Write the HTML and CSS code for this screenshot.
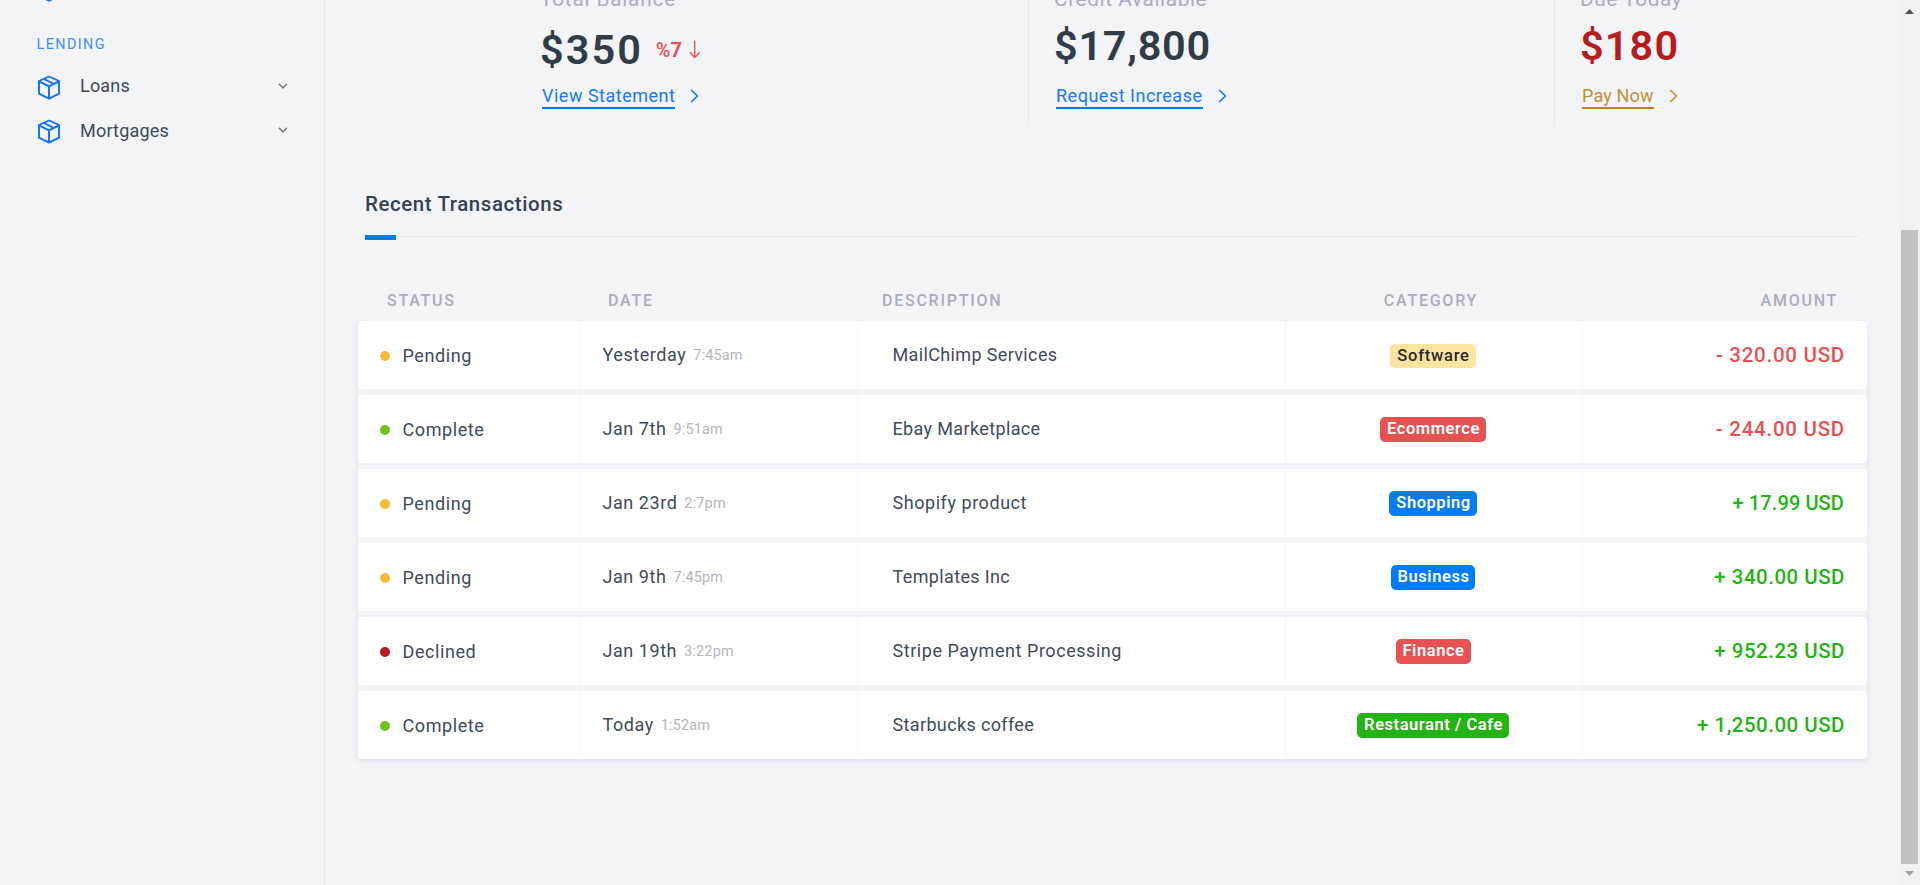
FILE: index.html
```html
<!DOCTYPE html>
<html lang="en">
<head>
<meta charset="utf-8">
<title>Banking Dashboard</title>
<link rel="stylesheet" href="styles.css">
</head>
<body>
<svg class="defs" width="0" height="0">
  <symbol id="box" viewBox="0 0 24 25"><path d="M12 1.5 22 6V18.7L12 23.7 2 18.7V6ZM2 6.3 12 11.3 22 6.3M12 11.3V23.7M6.9 4 16.7 8.8"/></symbol>
  <symbol id="down" viewBox="0 0 10 6"><path d="M1 .9 5 4.8 9 .9"/></symbol>
  <symbol id="right" viewBox="0 0 9 14"><path d="M1.2 1 7.4 7 1.2 13"/></symbol>
</svg>
<div class="page">
  <aside class="sidebar">
    <svg class="box-icon first"><use href="#box"/></svg>
    <div class="group">LENDING</div>
    <a class="nav"><svg class="box-icon"><use href="#box"/></svg><span class="nav-label">Loans</span><svg class="chev"><use href="#down"/></svg></a>
    <a class="nav"><svg class="box-icon"><use href="#box"/></svg><span class="nav-label">Mortgages</span><svg class="chev"><use href="#down"/></svg></a>
  </aside>
  <main class="content">
    <section class="balances">
      <div class="balance total">
        <div class="label">Total Balance</div>
        <div class="value low"><span>$350</span><span class="trend">%<b>7</b></span><svg class="arrow" viewBox="0 0 12 19"><path d="M5.7.5V17.5M.8 12.3 5.7 17.4 10.8 12.3"/></svg></div>
        <div class="action"><a class="link">View Statement</a><svg class="go"><use href="#right"/></svg></div>
      </div>
      <div class="balance credit">
        <div class="label">Credit Available</div>
        <div class="value">$17,800</div>
        <div class="action"><a class="link">Request Increase</a><svg class="go"><use href="#right"/></svg></div>
      </div>
      <div class="balance due">
        <div class="label">Due Today</div>
        <div class="value red">$180</div>
        <div class="action gold"><a class="link">Pay Now</a><svg class="go"><use href="#right"/></svg></div>
      </div>
    </section>
    <h2 class="title">Recent Transactions</h2>
    <div class="rule"><div class="rule-mark"></div></div>
    <section class="table">
      <div class="head cols"><span>STATUS</span><span>DATE</span><span>DESCRIPTION</span><span>CATEGORY</span><span>AMOUNT</span></div>
      <div class="rows">
        <div class="row cols">
          <div class="status"><i class="dot yellow"></i><span>Pending</span></div>
          <div class="date"><span>Yesterday</span><small>7:45am</small></div>
          <div class="desc">MailChimp Services</div>
          <div class="cat"><span class="badge soft">Software</span></div>
          <div class="amount minus">- 320.00 USD</div>
        </div>
        <div class="row cols">
          <div class="status"><i class="dot green"></i><span>Complete</span></div>
          <div class="date"><span>Jan 7th</span><small>9:51am</small></div>
          <div class="desc">Ebay Marketplace</div>
          <div class="cat"><span class="badge danger">Ecommerce</span></div>
          <div class="amount minus">- 244.00 USD</div>
        </div>
        <div class="row cols">
          <div class="status"><i class="dot yellow"></i><span>Pending</span></div>
          <div class="date"><span>Jan 23rd</span><small>2:7pm</small></div>
          <div class="desc wide">Shopify product</div>
          <div class="cat"><span class="badge primary">Shopping</span></div>
          <div class="amount plus tight">+ 17.99 USD</div>
        </div>
        <div class="row cols">
          <div class="status"><i class="dot yellow"></i><span>Pending</span></div>
          <div class="date"><span>Jan 9th</span><small>7:45pm</small></div>
          <div class="desc">Templates Inc</div>
          <div class="cat"><span class="badge primary">Business</span></div>
          <div class="amount plus">+ 340.00 USD</div>
        </div>
        <div class="row cols">
          <div class="status"><i class="dot dark"></i><span>Declined</span></div>
          <div class="date"><span>Jan 19th</span><small>3:22pm</small></div>
          <div class="desc wide">Stripe Payment Processing</div>
          <div class="cat"><span class="badge danger">Finance</span></div>
          <div class="amount plus">+ 952.23 USD</div>
        </div>
        <div class="row cols">
          <div class="status"><i class="dot green"></i><span>Complete</span></div>
          <div class="date"><span>Today</span><small>1:52am</small></div>
          <div class="desc">Starbucks coffee</div>
          <div class="cat"><span class="badge success">Restaurant / Cafe</span></div>
          <div class="amount plus">+ 1,250.00 USD</div>
        </div>
      </div>
    </section>
  </main>
  <div class="scrollbar">
    <svg class="tri up" viewBox="0 0 9 5"><path d="M0 5H9L4.5 0Z"/></svg>
    <div class="thumb"></div>
    <svg class="tri down" viewBox="0 0 9 5"><path d="M0 0H9L4.5 5Z"/></svg>
  </div>
</div>
</body>
</html>
```
FILE: styles.css
```css
* { box-sizing: border-box; }
body { margin: 0; background: #f2f4f8; color: #3e4b5b; font-family: Roboto, "Open Sans", sans-serif; font-size: 18px; white-space: nowrap; overflow: hidden; }
.defs { display: none; }
.page { display: flex; width: 1920px; height: 885px; }

.sidebar { width: 325px; border-right: 1px solid #e4e6eb; padding-left: 36px; overflow: hidden; }
.box-icon { width: 24px; height: 25px; fill: none; stroke: #0e6fff; stroke-width: 1.9; stroke-linejoin: round; flex: none; }
.box-icon.first { display: block; margin: -23px 0 0 1px; }
.group { margin-top: 33px; height: 20px; line-height: 20px; font-size: 14.4px; letter-spacing: 1.4px; padding-left: .5px; color: #448eef; }
.nav { display: flex; align-items: center; height: 44px; padding: 0 36px 0 1px; }
.group + .nav { margin-top: 10px; }
.nav-label { margin-left: 19px; flex: 1; padding-bottom: 3px; letter-spacing: .2px; }
.nav + .nav .nav-label { padding-bottom: 1px; }
.chev { width: 10px; height: 6px; fill: none; stroke: #7d8590; stroke-width: 1.6; margin-bottom: 3px; }

.content { width: 1574px; }
.balances { display: flex; height: 126px; }
.balance { border-right: 1px solid #e6e8ed; }
.total { width: 704px; padding-left: 215px; }
.credit { width: 526px; padding-left: 25px; }
.due { padding-left: 25px; border: 0; }
.label { height: 26px; margin-top: -13px; line-height: 24px; font-size: 20.8px; letter-spacing: .6px; color: #a9adbd; }
.total .label { letter-spacing: .8px; }
.value { display: flex; align-items: center; height: 65px; font-size: 41.5px; line-height: 48px; font-weight: 600; color: #323c47; letter-spacing: .7px; }
.value.low { padding-top: 8px; letter-spacing: 2px; }
.value.red { color: #b71b1b; letter-spacing: 1.1px; }
.trend { font-size: 20px; font-weight: 500; letter-spacing: 0; color: #e65252; margin-left: 13px; }
.trend b { font-weight: 700; }
.arrow { width: 12px; height: 19px; margin-left: 7px; fill: none; stroke: #e65252; stroke-width: 1.4; }
.action { display: flex; align-items: flex-start; color: #1a78f5; padding-left: 2px; margin-top: 6px; }
.link { height: 25px; line-height: 24px; border-bottom: 2px solid #047bf8; letter-spacing: .51px; }
.go { width: 9px; height: 14px; margin: 5px 0 0 15px; fill: none; stroke: #1a78f5; stroke-width: 1.7; }
.gold { color: #c19137; }
.gold .link { border-color: #bd861b; letter-spacing: .15px; }
.gold .go { stroke: #c19137; }

.title { margin: 64px 0 0 40px; font-size: 20.5px; line-height: 28px; font-weight: 500; color: #334152; letter-spacing: .57px; }
.rule { margin: 18px 40px 0; height: 1px; background: #e6e8ec; }
.rule-mark { width: 31px; height: 5px; background: #047bf8; position: relative; top: -1px; }

.table { width: 1509px; margin-left: 33px; }
.cols { display: grid; grid-template-columns: 223px 277px 428px 297px 284px; }
.head { margin-top: 53px; height: 31px; line-height: 22px; font-size: 16px; font-weight: 500; letter-spacing: 1.75px; color: #a9adbd; }
.head span:nth-child(1) { padding-left: 29px; }
.head span:nth-child(2) { padding-left: 27px; }
.head span:nth-child(3) { padding-left: 24px; }
.head span:nth-child(4) { text-align: center; padding-right: 7px; }
.head span:nth-child(5) { text-align: right; padding-right: 29px; }
.rows { display: grid; gap: 6px; height: 438px; border-radius: 4px; grid-template-rows: repeat(6, 1fr); background: #f2f4f8; box-shadow: 0 2px 5px rgba(69, 101, 173, .12); }
.row { background: #fff; border-radius: 4px; }
.row > div { display: flex; align-items: center; border-right: 1px solid #f5f6f8; padding-bottom: 1px; }
.row > div:last-child { border: 0; }
.row .status { padding: 1px 0 0 22px; letter-spacing: .58px; }
.dot { width: 10px; height: 10px; border-radius: 50%; margin-right: 12.5px; }
.yellow { background: #f8bc34; }
.green { background: #71c21a; }
.dark { background: #b71b1b; }
.date { padding-left: 21.5px; letter-spacing: .55px; }
.date small { font-size: 14.4px; letter-spacing: .2px; margin: 2px 0 0 7px; color: #b1b5c1; }
.desc { padding-left: 34.5px; letter-spacing: .36px; }
.desc.wide { letter-spacing: .55px; }
.row .cat { justify-content: center; padding: 1px 2px 0 0; }
.badge { height: 25px; line-height: 24px; padding: 0 6px 0 7px; border-radius: 5px; font-size: 16.5px; font-weight: 600; color: #fff; letter-spacing: .55px; }
.soft { height: 24px; background: #fbe4a0; color: #292b2c; font-weight: 500; letter-spacing: .75px; }
.danger { background: #e65252; }
.primary { background: #047bf8; }
.success { background: #24b314; }
.amount { justify-content: flex-end; padding-right: 22px; font-size: 20.5px; font-weight: 500; letter-spacing: .5px; }
.amount.tight { font-size: 20px; letter-spacing: .1px; padding-right: 23px; }
.minus { color: #e65252; letter-spacing: .75px; }
.plus { color: #24b314; }

.scrollbar { width: 21px; background: #f1f1f1; display: flex; flex-direction: column; align-items: center; padding: 9px 0; }
.tri { width: 9px; height: 5px; fill: #505050; }
.tri.down { fill: #a3a3a3; margin-top: 7px; }
.thumb { width: 17px; height: 634px; margin-top: 216px; background: #c1c1c1; }
```
